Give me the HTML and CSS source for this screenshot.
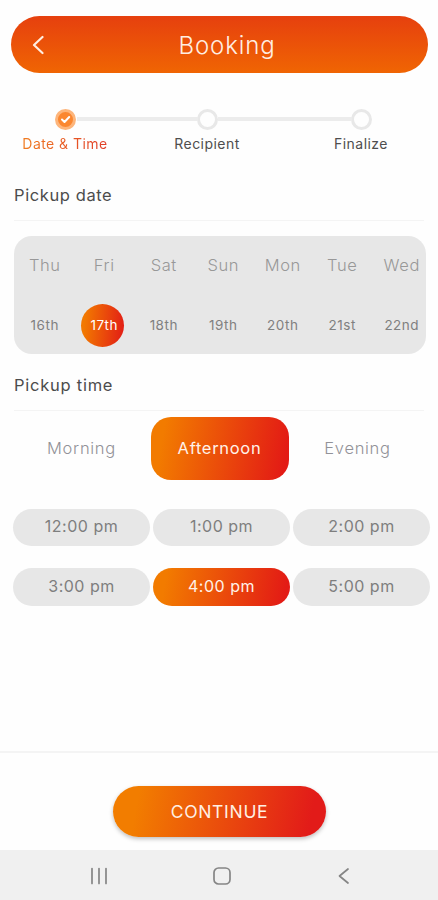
FILE: index.html
```html
<!DOCTYPE html>
<html lang="en">
<head>
<meta charset="utf-8">
<meta name="viewport" content="width=device-width, initial-scale=1">
<title>Booking</title>
<link rel="stylesheet" href="styles.css">
</head>
<body>
<div class="app">
  <header class="header">
    <svg class="back" width="12" height="20" viewBox="0 0 12 20"><path d="M10.500 2 2 10l8.500 8"/></svg>
    <h1>Booking</h1>
  </header>

  <ol class="stepper">
    <li class="step active">
      <span class="dot"><svg width="11" height="9" viewBox="0 0 11 9"><path d="M2 4.500 4.500 7 9.200 2"/></svg></span>
      <span class="step-label">Date &amp; Time</span>
    </li>
    <li class="step middle"><span class="dot"></span><span class="step-label">Recipient</span></li>
    <li class="step last"><span class="dot"></span><span class="step-label">Finalize</span></li>
  </ol>

  <h2 class="title-date">Pickup date</h2>
  <section class="dates">
    <div class="day"><span>Thu</span><b>16th</b></div>
    <div class="day selected"><span>Fri</span><b>17th</b></div>
    <div class="day"><span>Sat</span><b>18th</b></div>
    <div class="day"><span>Sun</span><b>19th</b></div>
    <div class="day"><span>Mon</span><b>20th</b></div>
    <div class="day"><span>Tue</span><b>21st</b></div>
    <div class="day"><span>Wed</span><b>22nd</b></div>
  </section>

  <h2 class="title-time">Pickup time</h2>
  <nav class="periods">
    <button class="morning">Morning</button>
    <button class="selected">Afternoon</button>
    <button class="evening">Evening</button>
  </nav>
  <section class="slots">
    <button>12:00 pm</button>
    <button>1:00 pm</button>
    <button>2:00 pm</button>
    <button>3:00 pm</button>
    <button class="selected">4:00 pm</button>
    <button>5:00 pm</button>
  </section>

  <footer class="footer"><button class="continue">CONTINUE</button></footer>
  <div class="system-nav">
    <svg width="18" height="18" viewBox="0 0 18 18"><path d="M2 1.500v15M9 1.500v15M16 1.500v15"/></svg>
    <svg width="18" height="18" viewBox="0 0 18 18"><rect x="1" y="1" width="16" height="16" rx="4.500"/></svg>
    <svg width="18" height="18" viewBox="0 0 18 18"><path d="M13 2 4.500 9l8.500 7"/></svg>
  </div>
</div>
</body>
</html>
```
FILE: styles.css
```css
* { box-sizing: border-box; }
body { margin: 0; background: #fefefe; font-family: Inter, "Open Sans", sans-serif; }
button { border: 0; padding: 0; background: none; font: inherit; color: inherit; letter-spacing: inherit; }
svg { display: block; fill: none; stroke-linecap: round; stroke-linejoin: round; }
.app { width: 438px; height: 900px; display: flex; flex-direction: column; overflow: hidden; }

.header {
  height: 57px; margin: 16px 10px 0 11px; border-radius: 29px; flex: none;
  display: grid; grid-template-columns: 22px 1fr 28px; align-items: center; padding-left: 21px;
  background: linear-gradient(#e6400e, #f06503); color: #ffeee2;
}
.back { stroke: #ffeee2; stroke-width: 2.200; }
.header h1 { margin: 0; font-size: 24px; line-height: 30px; font-weight: 300; text-align: center; letter-spacing: .9px; padding-top: 2px; }

.stepper { list-style: none; margin: 36px 0 0; padding: 0; height: 46px; display: grid; grid-template-columns: 130px 154px 154px; flex: none; }
.step { display: flex; flex-direction: column; align-items: center; font-size: 14px; color: #4e4e4e; letter-spacing: .45px; }
.dot {
  position: relative; width: 21px; height: 21px; border: 3.500px solid #e8e8e8; border-radius: 50%;
  display: flex; align-items: center; justify-content: center; background: #fefefe;
}
.step + .step .dot::before { content: ""; position: absolute; right: 17px; top: 5px; width: 121px; height: 4px; background: #ececec; }
.step.last .dot::before { width: 134px; }
.active .dot { background: #fb8730; border-color: #fdb57b; border-width: 3px; }
.active svg { stroke: #fff; stroke-width: 2; }
.step-label { margin-top: 5px; line-height: 18px; white-space: nowrap; }
.active .step-label { color: transparent; background: linear-gradient(90deg, #f07c20, #e03c28); background-clip: text; -webkit-background-clip: text; }

h2 { flex: none; margin: 0 14px; font-size: 16.500px; line-height: 24px; font-weight: 400; color: #4c4c4c; border-bottom: 1px solid #f4f4f4; letter-spacing: .6px; }
.title-date { margin-top: 28px; height: 38px; }
.title-time { margin-top: 19px; height: 38px; letter-spacing: .75px; }

.dates {
  flex: none; width: 412px; height: 118px; margin: 15px 0 0 14px; border-radius: 18px; background: #e7e7e7;
  display: grid; grid-template-columns: repeat(7, 59.500px); padding-left: 1px; overflow: hidden;
}
.day { display: flex; flex-direction: column; align-items: center; }
.day span { margin-top: 18px; font-size: 16.500px; line-height: 22px; font-weight: 300; color: #989898; letter-spacing: .6px; }
.day b { width: 43px; height: 43px; margin-top: 28px; border-radius: 50%; font-size: 13.500px; line-height: 43px; font-weight: 400; text-align: center; color: #808080; letter-spacing: .5px; }
.day.selected b { color: #fff; background: linear-gradient(95deg, #f27900 10%, #e21b16); position: relative; left: -1.500px; padding-left: 3px; }

.periods { flex: none; height: 63px; margin: 6px 14px 0 12.500px; display: grid; grid-template-columns: 138px 138px 138px; color: #929298; font-size: 16.500px; font-weight: 300; letter-spacing: .7px; }
.periods button { padding-bottom: 2px; }
.periods .selected { border-radius: 20px; background: linear-gradient(100deg, #f27b00 10%, #e31b15 95%); color: #fff2e9; font-weight: 400; }

.slots { flex: none; display: grid; grid-template-columns: repeat(3, 137px); grid-auto-rows: 37.500px; gap: 22px 3px; margin: 28.500px 0 0 13px; font-size: 16px; color: #7e7e7e; letter-spacing: .5px; }
.slots button { border-radius: 19px; background: #e7e7e7; padding-bottom: 2px; }
.slots .selected { background: linear-gradient(100deg, #f27b00 10%, #e31b15 95%); color: #fff2e9; }

.footer { flex: none; margin-top: auto; height: 99px; border-top: 2px solid #f4f4f4; display: flex; justify-content: center; padding: 33px 0 0 1px; }
.continue {
  width: 213px; height: 51px; border-radius: 26px; color: #fff0e4; font-size: 17.500px; letter-spacing: .7px;
  background: linear-gradient(100deg, #f27d00 12%, #e21b19 92%); box-shadow: 0 2px 4px rgba(0, 0, 0, .25);
}
.system-nav { flex: none; height: 50px; background: #f0f0f0; display: flex; justify-content: space-between; align-items: center; padding: 2px 85px 0 90px; }
.system-nav svg { stroke: #858585; stroke-width: 1.700; }
```
